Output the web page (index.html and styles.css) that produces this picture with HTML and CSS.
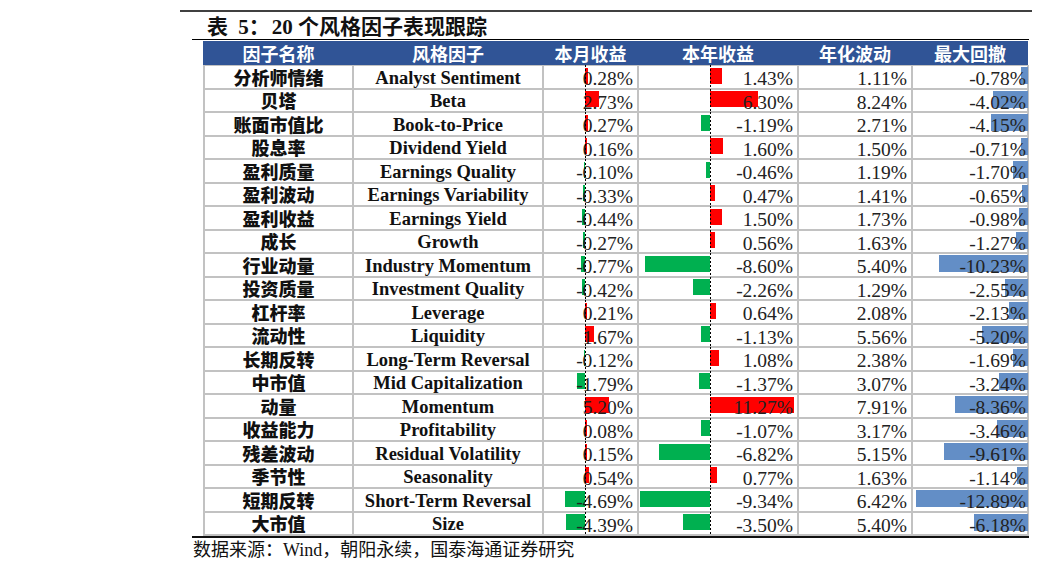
FILE: index.html
```html
<!DOCTYPE html>
<html lang="zh-CN">
<head>
<meta charset="utf-8">
<title>20个风格因子表现跟踪</title>
<link rel="stylesheet" href="styles.css">
</head>
<body>
<div class="page">
  <div class="rule-top"></div>
  <div class="title"><span class="t-cn t-first">表</span> 5<span class="t-cn t-colon">：</span>20 <span class="t-cn">个风格因子表现跟踪</span></div>
  <div class="rule-title"></div>

  <div class="thead">
    <div class="th">因子名称</div>
    <div class="th">风格因子</div>
    <div class="th">本月收益</div>
    <div class="th">本年收益</div>
    <div class="th">年化波动</div>
    <div class="th">最大回撤</div>
  </div>

  <div class="tbody">
    <div class="cell name">分析师情绪</div><div class="cell en">Analyst Sentiment</div>
    <div class="cell num m"><i class="bar up" style="left:41px;width:2.7px"></i><span class="val">0.28%</span><i class="dash"></i></div>
    <div class="cell num y"><i class="bar up" style="left:71px;width:11.6px"></i><span class="val">1.43%</span><i class="dash"></i></div>
    <div class="cell num">1.11%</div>
    <div class="cell num d"><i class="bar6" style="width:7.4px"></i><span class="val">-0.78%</span></div>

    <div class="cell name">贝塔</div><div class="cell en">Beta</div>
    <div class="cell num m"><i class="bar up" style="left:41px;width:13.5px"></i><span class="val">2.73%</span><i class="dash"></i></div>
    <div class="cell num y"><i class="bar up" style="left:71px;width:47.6px"></i><span class="val">6.30%</span><i class="dash"></i></div>
    <div class="cell num">8.24%</div>
    <div class="cell num d"><i class="bar6" style="width:35.5px"></i><span class="val">-4.02%</span></div>

    <div class="cell name">账面市值比</div><div class="cell en">Book-to-Price</div>
    <div class="cell num m"><i class="bar up" style="left:41px;width:2.7px"></i><span class="val">0.27%</span><i class="dash"></i></div>
    <div class="cell num y"><i class="bar dn" style="left:61.5px;width:9.5px"></i><span class="val">-1.19%</span><i class="dash"></i></div>
    <div class="cell num">2.71%</div>
    <div class="cell num d"><i class="bar6" style="width:36.6px"></i><span class="val">-4.15%</span></div>

    <div class="cell name">股息率</div><div class="cell en">Dividend Yield</div>
    <div class="cell num m"><i class="bar up" style="left:41px;width:2.2px"></i><span class="val">0.16%</span><i class="dash"></i></div>
    <div class="cell num y"><i class="bar up" style="left:71px;width:12.8px"></i><span class="val">1.60%</span><i class="dash"></i></div>
    <div class="cell num">1.50%</div>
    <div class="cell num d"><i class="bar6" style="width:6.8px"></i><span class="val">-0.71%</span></div>

    <div class="cell name">盈利质量</div><div class="cell en">Earnings Quality</div>
    <div class="cell num m"><i class="bar dn" style="left:39.6px;width:1.4px"></i><span class="val">-0.10%</span><i class="dash"></i></div>
    <div class="cell num y"><i class="bar dn" style="left:67px;width:4px"></i><span class="val">-0.46%</span><i class="dash"></i></div>
    <div class="cell num">1.19%</div>
    <div class="cell num d"><i class="bar6" style="width:15.4px"></i><span class="val">-1.70%</span></div>

    <div class="cell name">盈利波动</div><div class="cell en">Earnings Variability</div>
    <div class="cell num m"><i class="bar dn" style="left:38.6px;width:2.4px"></i><span class="val">-0.33%</span><i class="dash"></i></div>
    <div class="cell num y"><i class="bar up" style="left:71px;width:4.5px"></i><span class="val">0.47%</span><i class="dash"></i></div>
    <div class="cell num">1.41%</div>
    <div class="cell num d"><i class="bar6" style="width:6.3px"></i><span class="val">-0.65%</span></div>

    <div class="cell name">盈利收益</div><div class="cell en">Earnings Yield</div>
    <div class="cell num m"><i class="bar dn" style="left:38.2px;width:2.8px"></i><span class="val">-0.44%</span><i class="dash"></i></div>
    <div class="cell num y"><i class="bar up" style="left:71px;width:12.1px"></i><span class="val">1.50%</span><i class="dash"></i></div>
    <div class="cell num">1.73%</div>
    <div class="cell num d"><i class="bar6" style="width:9.2px"></i><span class="val">-0.98%</span></div>

    <div class="cell name">成长</div><div class="cell en">Growth</div>
    <div class="cell num m"><i class="bar dn" style="left:38.9px;width:2.1px"></i><span class="val">-0.27%</span><i class="dash"></i></div>
    <div class="cell num y"><i class="bar up" style="left:71px;width:5.1px"></i><span class="val">0.56%</span><i class="dash"></i></div>
    <div class="cell num">1.63%</div>
    <div class="cell num d"><i class="bar6" style="width:11.7px"></i><span class="val">-1.27%</span></div>

    <div class="cell name">行业动量</div><div class="cell en">Industry Momentum</div>
    <div class="cell num m"><i class="bar dn" style="left:36.8px;width:4.2px"></i><span class="val">-0.77%</span><i class="dash"></i></div>
    <div class="cell num y"><i class="bar dn" style="left:6.3px;width:64.7px"></i><span class="val">-8.60%</span><i class="dash"></i></div>
    <div class="cell num">5.40%</div>
    <div class="cell num d"><i class="bar6" style="width:89.2px"></i><span class="val">-10.23%</span></div>

    <div class="cell name">投资质量</div><div class="cell en">Investment Quality</div>
    <div class="cell num m"><i class="bar dn" style="left:38.3px;width:2.7px"></i><span class="val">-0.42%</span><i class="dash"></i></div>
    <div class="cell num y"><i class="bar dn" style="left:53.6px;width:17.4px"></i><span class="val">-2.26%</span><i class="dash"></i></div>
    <div class="cell num">1.29%</div>
    <div class="cell num d"><i class="bar6" style="width:22.8px"></i><span class="val">-2.55%</span></div>

    <div class="cell name">杠杆率</div><div class="cell en">Leverage</div>
    <div class="cell num m"><i class="bar up" style="left:41px;width:2.4px"></i><span class="val">0.21%</span><i class="dash"></i></div>
    <div class="cell num y"><i class="bar up" style="left:71px;width:5.7px"></i><span class="val">0.64%</span><i class="dash"></i></div>
    <div class="cell num">2.08%</div>
    <div class="cell num d"><i class="bar6" style="width:19.1px"></i><span class="val">-2.13%</span></div>

    <div class="cell name">流动性</div><div class="cell en">Liquidity</div>
    <div class="cell num m"><i class="bar up" style="left:41px;width:8.8px"></i><span class="val">1.67%</span><i class="dash"></i></div>
    <div class="cell num y"><i class="bar dn" style="left:62px;width:9px"></i><span class="val">-1.13%</span><i class="dash"></i></div>
    <div class="cell num">5.56%</div>
    <div class="cell num d"><i class="bar6" style="width:45.7px"></i><span class="val">-5.20%</span></div>

    <div class="cell name">长期反转</div><div class="cell en">Long-Term Reversal</div>
    <div class="cell num m"><i class="bar dn" style="left:39.5px;width:1.5px"></i><span class="val">-0.12%</span><i class="dash"></i></div>
    <div class="cell num y"><i class="bar up" style="left:71px;width:9px"></i><span class="val">1.08%</span><i class="dash"></i></div>
    <div class="cell num">2.38%</div>
    <div class="cell num d"><i class="bar6" style="width:15.3px"></i><span class="val">-1.69%</span></div>

    <div class="cell name">中市值</div><div class="cell en">Mid Capitalization</div>
    <div class="cell num m"><i class="bar dn" style="left:32.7px;width:8.3px"></i><span class="val">-1.79%</span><i class="dash"></i></div>
    <div class="cell num y"><i class="bar dn" style="left:60.2px;width:10.8px"></i><span class="val">-1.37%</span><i class="dash"></i></div>
    <div class="cell num">3.07%</div>
    <div class="cell num d"><i class="bar6" style="width:28.7px"></i><span class="val">-3.24%</span></div>

    <div class="cell name">动量</div><div class="cell en">Momentum</div>
    <div class="cell num m"><i class="bar up" style="left:41px;width:24.4px"></i><span class="val">5.20%</span><i class="dash"></i></div>
    <div class="cell num y"><i class="bar up" style="left:71px;width:84.4px"></i><span class="val">11.27%</span><i class="dash"></i></div>
    <div class="cell num">7.91%</div>
    <div class="cell num d"><i class="bar6" style="width:73px"></i><span class="val">-8.36%</span></div>

    <div class="cell name">收益能力</div><div class="cell en">Profitability</div>
    <div class="cell num m"><i class="bar up" style="left:41px;width:1.9px"></i><span class="val">0.08%</span><i class="dash"></i></div>
    <div class="cell num y"><i class="bar dn" style="left:62.4px;width:8.6px"></i><span class="val">-1.07%</span><i class="dash"></i></div>
    <div class="cell num">3.17%</div>
    <div class="cell num d"><i class="bar6" style="width:30.6px"></i><span class="val">-3.46%</span></div>

    <div class="cell name">残差波动</div><div class="cell en">Residual Volatility</div>
    <div class="cell num m"><i class="bar up" style="left:41px;width:2.2px"></i><span class="val">0.15%</span><i class="dash"></i></div>
    <div class="cell num y"><i class="bar dn" style="left:19.6px;width:51.4px"></i><span class="val">-6.82%</span><i class="dash"></i></div>
    <div class="cell num">5.15%</div>
    <div class="cell num d"><i class="bar6" style="width:83.8px"></i><span class="val">-9.61%</span></div>

    <div class="cell name">季节性</div><div class="cell en">Seasonality</div>
    <div class="cell num m"><i class="bar up" style="left:41px;width:3.9px"></i><span class="val">0.54%</span><i class="dash"></i></div>
    <div class="cell num y"><i class="bar up" style="left:71px;width:6.7px"></i><span class="val">0.77%</span><i class="dash"></i></div>
    <div class="cell num">1.63%</div>
    <div class="cell num d"><i class="bar6" style="width:10.6px"></i><span class="val">-1.14%</span></div>

    <div class="cell name">短期反转</div><div class="cell en">Short-Term Reversal</div>
    <div class="cell num m"><i class="bar dn" style="left:20.8px;width:20.2px"></i><span class="val">-4.69%</span><i class="dash"></i></div>
    <div class="cell num y"><i class="bar dn" style="left:0.8px;width:70.2px"></i><span class="val">-9.34%</span><i class="dash"></i></div>
    <div class="cell num">6.42%</div>
    <div class="cell num d"><i class="bar6" style="width:112.2px"></i><span class="val">-12.89%</span></div>

    <div class="cell name">大市值</div><div class="cell en">Size</div>
    <div class="cell num m"><i class="bar dn" style="left:22px;width:19px"></i><span class="val">-4.39%</span><i class="dash"></i></div>
    <div class="cell num y"><i class="bar dn" style="left:44.3px;width:26.7px"></i><span class="val">-3.50%</span><i class="dash"></i></div>
    <div class="cell num">5.40%</div>
    <div class="cell num d"><i class="bar6" style="width:54.2px"></i><span class="val">-6.18%</span></div>
  </div>

  <div class="rule-bottom"></div>
  <div class="source">数据来源：Wind，朝阳永续，国泰海通证券研究</div>
</div>
</body>
</html>
```

FILE: styles.css
```css
* { box-sizing: border-box; }

body {
  margin: 0;
  width: 1037px;
  background: #ffffff;
  color: #1a1a1a;
  font-family: "Liberation Serif", "Noto Sans CJK SC", serif;
}

.page {
  padding-top: 10px;
}

.rule-top {
  margin-left: 180px;
  width: 852px;
  height: 2px;
  background: #404040;
}

.title {
  margin-left: 207px;
  height: 27px;
  line-height: 27px;
  font-family: "Liberation Serif", "Noto Sans CJK SC", serif;
  font-weight: 700;
  font-size: 21px;
  color: #111111;
  white-space: pre;
}

.title .t-cn {
  font-family: "Noto Sans CJK SC", sans-serif;
}

.title .t-first {
  margin-right: 5px;
}

.title .t-colon {
  margin-right: 2px;
}

.rule-title {
  margin-left: 192px;
  width: 837px;
  height: 1px;
  background: #000000;
  margin-bottom: 1px;
}

.thead {
  margin-left: 203px;
  width: 825px;
  height: 24px;
  display: grid;
  grid-template-columns: 147px 188px 93px 158px 112px 114px;
  column-gap: 2px;
  padding: 0 1px 0 2px;
  background: #305496;
}

.th {
  color: #ffffff;
  text-align: center;
  font-family: "Noto Sans CJK SC", sans-serif;
  font-weight: 700;
  font-size: 18px;
  line-height: 24px;
  white-space: nowrap;
}

.tbody {
  margin-left: 203px;
  width: 826px;
  display: grid;
  grid-template-columns: 147px 188px 93px 158px 112px 114px;
  grid-auto-rows: 21.5px;
  gap: 2px;
  padding: 1px 2px 2px 2px;
  background: #c2c2c2;
}

.cell {
  position: relative;
  background: #ffffff;
  white-space: nowrap;
  overflow: visible;
}

.name {
  text-align: center;
  font-family: "Noto Sans CJK SC", sans-serif;
  font-weight: 900;
  font-size: 18px;
  line-height: 20px;
  padding-top: 0.5px;
  color: #111111;
}

.en {
  text-align: center;
  font-family: "Liberation Serif", serif;
  font-weight: 700;
  font-size: 18.5px;
  line-height: 20px;
  padding-top: 1.8px;
  color: #111111;
}

.num {
  text-align: right;
  font-family: "Liberation Serif", serif;
  font-size: 19.5px;
  line-height: 20px;
  padding: 3.4px 4px 0 0;
  color: #222222;
}

.num.d {
  padding-right: 1px;
}

.val {
  position: relative;
}

.bar {
  position: absolute;
  top: 1.5px;
  height: 16px;
}

.bar.up { background: #ff0000; }
.bar.dn { background: #00b050; }

.bar6 {
  position: absolute;
  right: -1px;
  top: 1px;
  height: 17px;
  background: #638ec6;
}

.dash {
  position: absolute;
  top: -1px;
  bottom: -1px;
  width: 1px;
  background: repeating-linear-gradient(to bottom, #000000 0 2px, transparent 2px 4px);
}

.m .dash { left: 41px; }
.y .dash { left: 71px; }

.rule-bottom {
  margin-left: 192px;
  width: 837px;
  height: 1.5px;
  background: #111111;
}

.source {
  margin: 2px 0 0 193px;
  font-family: "Liberation Serif", "Noto Sans CJK SC", serif;
  font-size: 18px;
  line-height: 20px;
  color: #111111;
  white-space: nowrap;
}
```
